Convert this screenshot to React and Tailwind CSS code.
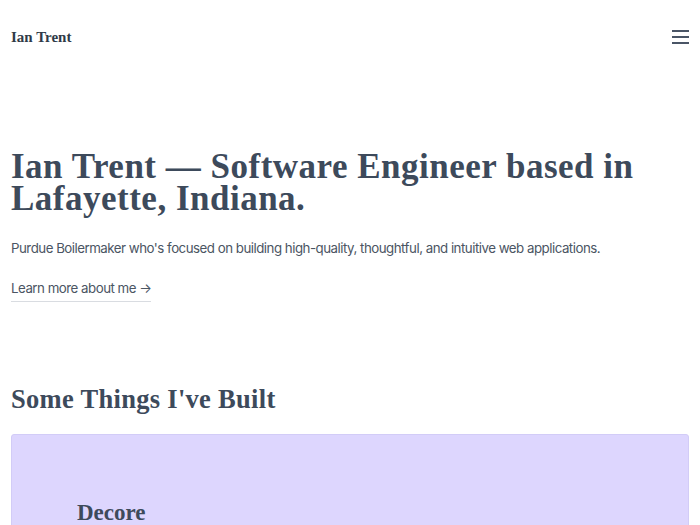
import React from "react";

const serif = { fontFamily: '"Liberation Serif", "DejaVu Serif", serif' };

function Header() {
  return (
    <header className="flex items-center justify-between h-[74px] px-[11px]">
      <a href="#" className="text-[15px] font-bold text-[#2f3a48]" style={serif}>
        Ian Trent
      </a>
      <button className="flex flex-col gap-[4px] w-[17px]" aria-label="Menu">
        <span className="block h-[2px] w-full bg-[#4a5566]" />
        <span className="block h-[2px] w-full bg-[#4a5566]" />
        <span className="block h-[2px] w-full bg-[#4a5566]" />
      </button>
    </header>
  );
}

export default function App() {
  return (
    <div className="min-h-screen bg-white text-[#3d4a5b]" style={{ fontFamily: "Inter, sans-serif" }}>
      <Header />
      <main className="px-[11px]">
        <section className="pt-[77px]">
          <h1 className="text-[35px] leading-[32px] font-bold tracking-[0.5px] text-[#3d4a5b]" style={serif}>
            Ian Trent — Software Engineer based in Lafayette, Indiana.
          </h1>
          <p className="mt-[22px] text-[13.3px] leading-[22px] tracking-[-0.5px] text-[#4b5563]">
            Purdue Boilermaker who's focused on building high-quality, thoughtful, and intuitive web applications.
          </p>
          <a href="#" className="inline-block mt-[19px] pb-[3px] text-[13.3px] leading-[20px] tracking-[-0.5px] text-[#4b5563] border-b border-[#d9dce1]">
            Learn more about me →
          </a>
        </section>
        <section className="mt-[79px]">
          <h2 className="text-[26.5px] leading-[36px] font-bold tracking-[0.3px] text-[#3d4a5b]" style={serif}>
            Some Things I've Built
          </h2>
          <div className="mt-[17px] h-[200px] rounded-t-[3px] border border-[#d2ccf7] bg-[#ddd6fe] pt-[63px] pl-[65px]">
            <h3 className="text-[23px] leading-[30px] font-bold text-[#3d4a5b]" style={serif}>
              Decore
            </h3>
          </div>
        </section>
      </main>
    </div>
  );
}
